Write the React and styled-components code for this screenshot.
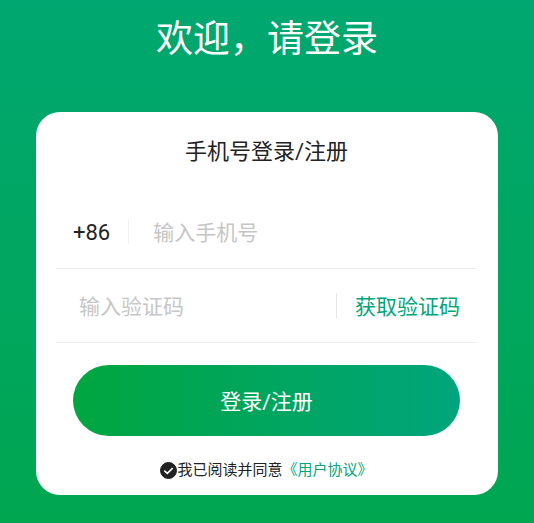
import { useState } from "react";
import styled, { createGlobalStyle } from "styled-components";

const GlobalStyle = createGlobalStyle`
  * {
    box-sizing: border-box;
  }
  body {
    margin: 0;
    font-family: Roboto, "Noto Sans CJK SC", sans-serif;
    color: #222;
  }
  button, input {
    font-family: inherit;
  }
`;

const Page = styled.main`
  min-height: 100vh;
  padding: 12px 36px 28px;
  background: linear-gradient(to bottom, #00a770, #00a650);
`;

const Welcome = styled.h1`
  margin: 0 0 44px;
  font-size: 37px;
  font-weight: 400;
  line-height: 56px;
  text-align: center;
  color: #fff;
`;

const Card = styled.form`
  display: flex;
  flex-direction: column;
  padding: 20px 21px 12px 20px;
  border-radius: 24px;
  background: #fff;
`;

const CardTitle = styled.h2`
  margin: 0 0 23px;
  font-size: 22px;
  font-weight: 400;
  line-height: 40px;
  text-align: center;
`;

const Field = styled.div`
  display: flex;
  align-items: center;
  height: 74px;
  padding: 0 17px;
  border-bottom: 1px solid #eee;
`;

const CountryCode = styled.label`
  padding-top: 2px;
  font-size: 22px;
  line-height: 24px;
`;

const Divider = styled.span`
  width: 1px;
  height: 25px;
  margin: 0 18px;
  background: ${(props) => (props.$light ? "#f0f0f0" : "#e4e4e4")};
`;

const TextInput = styled.input`
  flex: 1;
  min-width: 0;
  padding: 2px 6px 0;
  border: none;
  outline: none;
  background: transparent;
  font-size: 21px;
  line-height: 32px;
  color: #222;

  &::placeholder {
    color: #c6c6c6;
    opacity: 1;
  }
`;

const CodeButton = styled.button`
  padding: 2px 0 0;
  border: none;
  background: none;
  font-size: 21px;
  line-height: 32px;
  color: #00a57a;
  cursor: pointer;
`;

const SubmitButton = styled.button`
  height: 71px;
  margin: 22px 17px 21px;
  padding: 0 0 2px;
  border: none;
  border-radius: 36px;
  background: linear-gradient(to right, #00a63f, #00a57c);
  font-size: 21px;
  color: #fff;
  cursor: pointer;
`;

const Agreement = styled.div`
  display: flex;
  align-items: center;
  justify-content: center;
  font-size: 15px;
  line-height: 26px;
`;

const AgreeLabel = styled.label`
  display: flex;
  align-items: center;
`;

const AgreeCheck = styled.input`
  appearance: none;
  width: 17px;
  height: 17px;
  margin: 0;
  border: 1px solid #222;
  border-radius: 50%;

  &:checked {
    background: #222;
  }
`;

const CheckBox = styled.span`
  display: grid;

  > * {
    grid-area: 1 / 1;
  }
  > svg {
    pointer-events: none;
  }
`;

const AgreementLink = styled.a`
  color: #00a57a;
  text-decoration: none;
`;

function App() {
  const [phone, setPhone] = useState("");
  const [code, setCode] = useState("");
  const [agreed, setAgreed] = useState(true);

  const handleSubmit = (e) => {
    e.preventDefault();
  };

  return (
    <>
      <GlobalStyle />
      <Page>
        <Welcome>欢迎，请登录</Welcome>
        <Card onSubmit={handleSubmit}>
          <CardTitle>手机号登录/注册</CardTitle>
          <Field>
            <CountryCode htmlFor="phone">+86</CountryCode>
            <Divider $light />
            <TextInput
              id="phone"
              type="tel"
              placeholder="输入手机号"
              value={phone}
              onChange={(e) => setPhone(e.target.value)}
            />
          </Field>
          <Field>
            <TextInput
              type="text"
              aria-label="验证码"
              placeholder="输入验证码"
              value={code}
              onChange={(e) => setCode(e.target.value)}
            />
            <Divider />
            <CodeButton type="button">获取验证码</CodeButton>
          </Field>
          <SubmitButton type="submit">登录/注册</SubmitButton>
          <Agreement>
            <AgreeLabel>
              <CheckBox>
                <AgreeCheck
                  type="checkbox"
                  checked={agreed}
                  onChange={(e) => setAgreed(e.target.checked)}
                />
                {agreed && (
                  <svg width="17" height="17" viewBox="0 0 17 17" fill="none">
                    <path d="M4.3 8.6l3 2.8 5.4-5.3" stroke="#fff" strokeWidth="1.5" />
                  </svg>
                )}
              </CheckBox>
              我已阅读并同意
            </AgreeLabel>
            <AgreementLink href="#agreement">《用户协议》</AgreementLink>
          </Agreement>
        </Card>
      </Page>
    </>
  );
}

export default App;
